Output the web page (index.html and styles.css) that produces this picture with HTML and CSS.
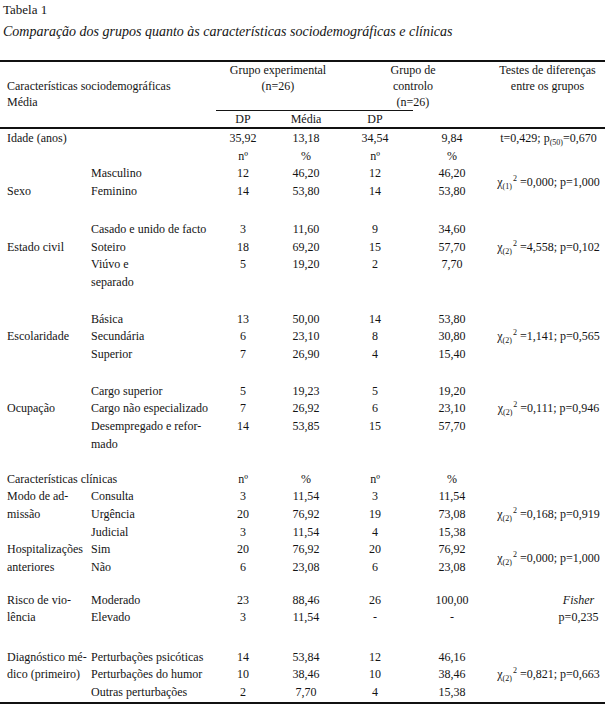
FILE: index.html
```html
<!DOCTYPE html>
<html lang="pt">
<head>
<meta charset="utf-8">
<title>Tabela 1</title>
<link rel="stylesheet" href="styles.css">
</head>
<body>
<div class="page">
  <p class="label">Tabela 1</p>
  <p class="caption">Comparação dos grupos quanto às características sociodemográficas e clínicas</p>
  <table class="data">
    <colgroup>
      <col class="c1"><col class="c2"><col class="c3"><col class="c4"><col class="c5"><col class="c6"><col class="c7">
    </colgroup>
    <thead>
      <tr class="h1">
        <th colspan="2" class="left head-first"><br>Características sociodemográficas<br>Média</th>
        <th colspan="2" class="exp">Grupo experimental<br>(n=26)</th>
        <th colspan="2">Grupo de<br>controlo<br>(n=26)</th>
        <th>Testes de diferenças<br>entre os grupos</th>
      </tr>
      <tr class="h2">
        <th colspan="2"></th>
        <th class="rule rule-start">DP</th>
        <th class="rule">Média</th>
        <th class="rule rule-end">DP</th>
        <th></th>
        <th></th>
      </tr>
    </thead>
    <tbody>
      <tr class="first-row">
        <td colspan="2" class="cat">Idade (anos)</td><td>35,92</td><td>13,18</td><td>34,54</td><td>9,84</td>
        <td class="test">t=0,429; p<sub>(50)</sub>=0,670</td>
      </tr>
      <tr>
        <td colspan="2"></td><td>nº</td><td>%</td><td>nº</td><td>%</td><td></td>
      </tr>
      <tr>
        <td class="cat"></td><td class="sub">Masculino</td><td>12</td><td>46,20</td><td>12</td><td>46,20</td>
        <td class="test mid" rowspan="2">χ<sub>(1)</sub><sup>2</sup> =0,000; p=1,000</td>
      </tr>
      <tr>
        <td class="cat">Sexo</td><td class="sub">Feminino</td><td>14</td><td>53,80</td><td>14</td><td>53,80</td>
      </tr>
      <tr class="gap g20"><td colspan="7"></td></tr>

      <tr>
        <td class="cat"></td><td class="sub">Casado e unido de facto</td><td>3</td><td>11,60</td><td>9</td><td>34,60</td><td></td>
      </tr>
      <tr>
        <td class="cat">Estado civil</td><td class="sub">Soteiro</td><td>18</td><td>69,20</td><td>15</td><td>57,70</td>
        <td class="test">χ<sub>(2)</sub><sup>2</sup> =4,558; p=0,102</td>
      </tr>
      <tr>
        <td class="cat"></td><td class="sub">Viúvo e<br>separado</td><td>5</td><td>19,20</td><td>2</td><td>7,70</td><td></td>
      </tr>
      <tr class="gap g19"><td colspan="7"></td></tr>

      <tr>
        <td class="cat"></td><td class="sub">Básica</td><td>13</td><td>50,00</td><td>14</td><td>53,80</td><td></td>
      </tr>
      <tr>
        <td class="cat">Escolaridade</td><td class="sub">Secundária</td><td>6</td><td>23,10</td><td>8</td><td>30,80</td>
        <td class="test">χ<sub>(2)</sub><sup>2</sup> =1,141; p=0,565</td>
      </tr>
      <tr>
        <td class="cat"></td><td class="sub">Superior</td><td>7</td><td>26,90</td><td>4</td><td>15,40</td><td></td>
      </tr>
      <tr class="gap g19"><td colspan="7"></td></tr>

      <tr>
        <td class="cat"></td><td class="sub">Cargo superior</td><td>5</td><td>19,23</td><td>5</td><td>19,20</td><td></td>
      </tr>
      <tr>
        <td class="cat">Ocupação</td><td class="sub">Cargo não especializado</td><td>7</td><td>26,92</td><td>6</td><td>23,10</td>
        <td class="test">χ<sub>(2)</sub><sup>2</sup> =0,111; p=0,946</td>
      </tr>
      <tr>
        <td class="cat"></td><td class="sub">Desempregado e refor-<br>mado</td><td>14</td><td>53,85</td><td>15</td><td>57,70</td><td></td>
      </tr>
      <tr class="gap g17"><td colspan="7"></td></tr>

      <tr>
        <td colspan="2" class="cat">Características clínicas</td><td>nº</td><td>%</td><td>nº</td><td>%</td><td></td>
      </tr>
      <tr>
        <td class="cat">Modo de ad-</td><td class="sub">Consulta</td><td>3</td><td>11,54</td><td>3</td><td>11,54</td><td></td>
      </tr>
      <tr>
        <td class="cat">missão</td><td class="sub">Urgência</td><td>20</td><td>76,92</td><td>19</td><td>73,08</td>
        <td class="test">χ<sub>(2)</sub><sup>2</sup> =0,168; p=0,919</td>
      </tr>
      <tr>
        <td class="cat"></td><td class="sub">Judicial</td><td>3</td><td>11,54</td><td>4</td><td>15,38</td><td></td>
      </tr>
      <tr>
        <td class="cat">Hospitalizações</td><td class="sub">Sim</td><td>20</td><td>76,92</td><td>20</td><td>76,92</td>
        <td class="test mid" rowspan="2">χ<sub>(2)</sub><sup>2</sup> =0,000; p=1,000</td>
      </tr>
      <tr>
        <td class="cat">anteriores</td><td class="sub">Não</td><td>6</td><td>23,08</td><td>6</td><td>23,08</td>
      </tr>
      <tr class="gap g15"><td colspan="7"></td></tr>

      <tr>
        <td class="cat">Risco de vio-</td><td class="sub">Moderado</td><td>23</td><td>88,46</td><td>26</td><td>100,00</td>
        <td class="test shifted"><i>Fisher</i></td>
      </tr>
      <tr>
        <td class="cat">lência</td><td class="sub">Elevado</td><td>3</td><td>11,54</td><td>-</td><td>-</td>
        <td class="test shifted">p=0,235</td>
      </tr>
      <tr class="gap g21"><td colspan="7"></td></tr>

      <tr>
        <td class="cat">Diagnóstico mé-</td><td class="sub">Perturbações psicóticas</td><td>14</td><td>53,84</td><td>12</td><td>46,16</td><td></td>
      </tr>
      <tr>
        <td class="cat">dico (primeiro)</td><td class="sub">Perturbações do humor</td><td>10</td><td>38,46</td><td>10</td><td>38,46</td>
        <td class="test">χ<sub>(2)</sub><sup>2</sup> =0,821; p=0,663</td>
      </tr>
      <tr class="last-row">
        <td class="cat"></td><td class="sub">Outras perturbações</td><td>2</td><td>7,70</td><td>4</td><td>15,38</td><td></td>
      </tr>
    </tbody>
  </table>
</div>
</body>
</html>
```

FILE: styles.css
```css
html, body {
  margin: 0;
  padding: 0;
  background: #ffffff;
}

body {
  font-family: "Liberation Serif", "Times New Roman", serif;
  color: #141414;
}

.page {
  width: 605px;
}

.label {
  margin: 0;
  padding-left: 3px;
  font-size: 13px;
  line-height: 20px;
}

.caption {
  margin: 3px 0 19px;
  padding-left: 3px;
  font-size: 14px;
  font-style: italic;
  line-height: 18px;
}

.data {
  width: 605px;
  table-layout: fixed;
  border-collapse: separate;
  border-spacing: 0;
  border-top: 2px solid #111111;
  font-size: 12px;
}

.c1 { width: 88px; }
.c2 { width: 122px; }
.c3 { width: 66px; }
.c4 { width: 60px; }
.c5 { width: 78px; }
.c6 { width: 76px; }
.c7 { width: 115px; }

.data th,
.data td {
  padding: 0;
  font-weight: normal;
  text-align: center;
  vertical-align: top;
  white-space: nowrap;
}

.data thead th {
  line-height: 16px;
}

.data .left {
  text-align: left;
  padding-left: 7px;
}

.data .exp {
  padding-left: 10px;
}

.h2 th {
  border-bottom: 2px solid #111111;
}

.h2 .rule {
  background-image: linear-gradient(#151515, #151515);
  background-repeat: no-repeat;
  background-size: 100% 1px;
  background-position: 0 0;
  padding-top: 1px;
}

.h2 .rule-start {
  background-position: 6px 0;
}

.h2 .rule-end {
  background-size: calc(100% - 1px) 1px;
}

.data tbody td {
  line-height: 17.7px;
}

.data .cat {
  text-align: left;
  padding-left: 7px;
}

.data .sub {
  text-align: left;
  padding-left: 3px;
}

.data .test {
  padding-left: 2px;
}

.data .test.mid {
  vertical-align: middle;
}

.data .test.shifted {
  padding-left: 62px;
}

.first-row td {
  padding-top: 1px;
}

.last-row td {
  border-bottom: 2px solid #111111;
}

.gap td { padding: 0; line-height: 0; }
.g15 td { height: 15px; }
.g17 td { height: 17px; }
.g19 td { height: 19px; }
.g20 td { height: 20px; }
.g21 td { height: 21.5px; }

sub,
sup {
  font-size: 8px;
  line-height: 0;
}

sub {
  vertical-align: -3px;
}

sup {
  vertical-align: 5px;
  margin-left: 1px;
}
```
